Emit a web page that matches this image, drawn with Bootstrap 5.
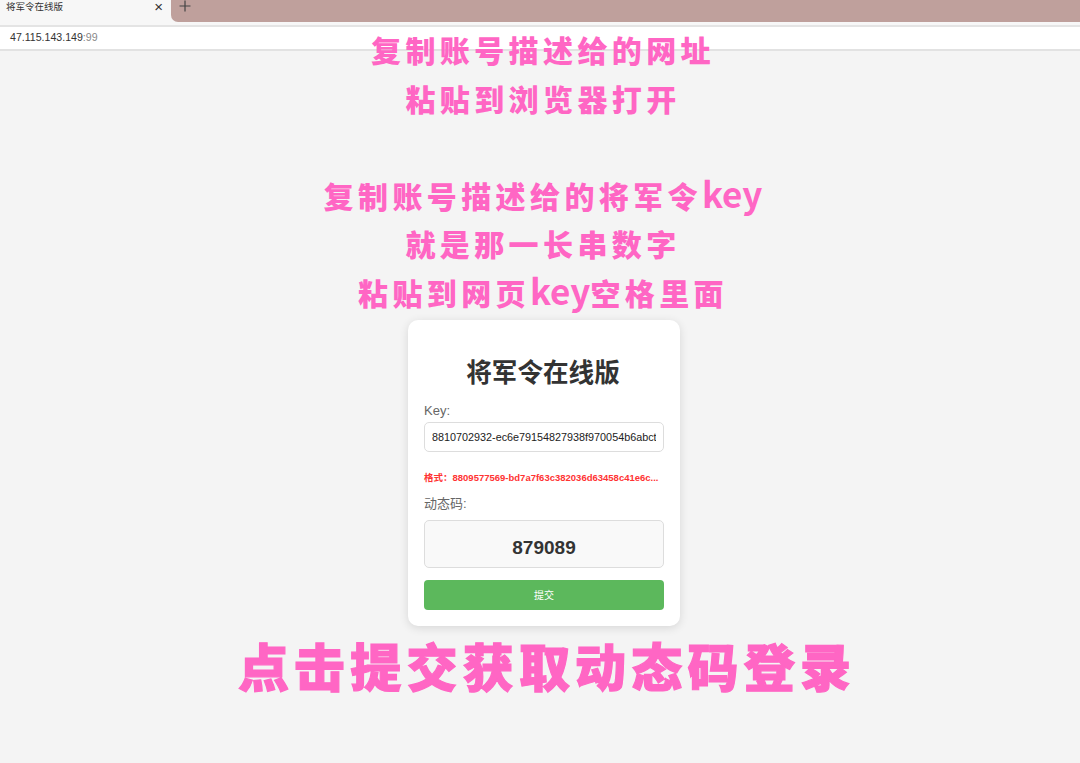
<!DOCTYPE html>
<html lang="zh-CN">
<head>
<meta charset="utf-8">
<title>将军令在线版</title>
<link rel="stylesheet" href="https://cdn.jsdelivr.net/npm/bootstrap@5.3.0/dist/css/bootstrap.min.css">
<style>
html,body{height:100%;}
body{background:#f4f4f4;font-family:"Liberation Sans","Noto Sans CJK SC",sans-serif;position:relative;overflow:hidden;}
.tabstrip{height:25px;background:#f7f7f7;}
.tabitem{width:171px;height:25px;background:#f7f7f7;font-size:9.5px;color:#333;padding-left:6px;line-height:14px;}
.tabclose{font-size:15px;line-height:14px;color:#333;margin-right:8px;}
.tabrest{background:#bfa09c;border-bottom-left-radius:7px;height:22px;padding-left:8px;}
.plusicon{display:block;width:12px;height:12px;stroke:#444;stroke-width:1.2;}
.addrbar{height:26px;background:#fff;border-top:2px solid #e4e4e4;border-bottom:2px solid #e2e2e2;font-size:10.6px;padding-left:10px;color:#333;line-height:21px;}
.addrport{color:#888;}
.overlaytext{position:absolute;left:0;right:0;top:25px;text-align:center;color:#ff66c4;font-family:"Noto Sans CJK SC",sans-serif;font-weight:900;font-size:30px;line-height:48.5px;letter-spacing:4.4px;margin-left:6px;}
.overlayline{height:48.5px;white-space:nowrap;}
.latinword{font-size:35px;letter-spacing:0;font-weight:700;line-height:1;}
.pagebody{padding-top:269px;}
.logincard{width:272px;height:306px;margin-left:408px;background:#fff;border-radius:10px;box-shadow:0 2px 10px rgba(0,0,0,.12);padding:16px;}
.cardtitle{font-size:25.6px;font-weight:700;color:#333;text-align:center;line-height:36px;margin:19px 0 12px;padding-right:2px;}
.fieldlabel{font-size:13px;color:#666;line-height:15px;margin-bottom:4px;display:block;}
.keyinput.form-control{height:30px;border:1.5px solid #ddd;border-radius:5px;font-size:10.8px;color:#222;padding:0 7px;line-height:26px;}
.hintline{font-size:9.5px;font-weight:700;color:#f33;line-height:14px;margin:19px 0 11px;white-space:nowrap;}
.codebox{height:48px;background:#f9f9f9;border:1.5px solid #ddd;border-radius:5px;font-size:19px;font-weight:700;color:#333;margin:9px 0 12px;padding-top:9px;}
.btn.submitbtn{height:30px;background:#5cb85c;border:0;border-radius:4px;font-size:10px;color:#fff;padding:0;}
.bigcaption{position:absolute;left:0;right:0;top:630px;text-align:center;color:#ff66c4;font-family:"Noto Sans CJK SC",sans-serif;font-weight:900;font-size:51px;line-height:70px;letter-spacing:5.2px;white-space:nowrap;-webkit-text-stroke:1.2px #ff66c4;margin-left:14px;}
</style>
</head>
<body>
<div class="tabstrip d-flex">
  <div class="tabitem d-flex justify-content-between align-items-start">
    <span>将军令在线版</span><span class="tabclose">×</span>
  </div>
  <div class="tabrest flex-grow-1">
    <svg class="plusicon" viewBox="0 0 12 12" aria-hidden="true"><path d="M6 .5V11.5M.5 6H11.5"/></svg>
  </div>
</div>
<div class="addrbar">47.115.143.149<span class="addrport">:99</span></div>
<div class="pagebody">
  <div class="logincard">
    <h1 class="cardtitle">将军令在线版</h1>
    <label class="fieldlabel" for="keyf">Key:</label>
    <input id="keyf" class="form-control keyinput" type="text" value="8810702932-ec6e79154827938f970054b6abctdef1234">
    <div class="hintline">格式：8809577569-bd7a7f63c382036d63458c41e6c...</div>
    <label class="fieldlabel">动态码:</label>
    <div class="codebox d-flex align-items-center justify-content-center">879089</div>
    <button class="btn submitbtn w-100" type="button">提交</button>
  </div>
</div>
<div class="overlaytext">
  <div class="overlayline">复制账号描述给的网址</div>
  <div class="overlayline">粘贴到浏览器打开</div>
  <div class="overlayline"></div>
  <div class="overlayline">复制账号描述给的将军令<span class="latinword">key</span></div>
  <div class="overlayline">就是那一长串数字</div>
  <div class="overlayline">粘贴到网页<span class="latinword">key</span>空格里面</div>
</div>
<div class="bigcaption">点击提交获取动态码登录</div>
<script src="https://cdn.jsdelivr.net/npm/bootstrap@5.3.0/dist/js/bootstrap.bundle.min.js"></script>
</body>
</html>
